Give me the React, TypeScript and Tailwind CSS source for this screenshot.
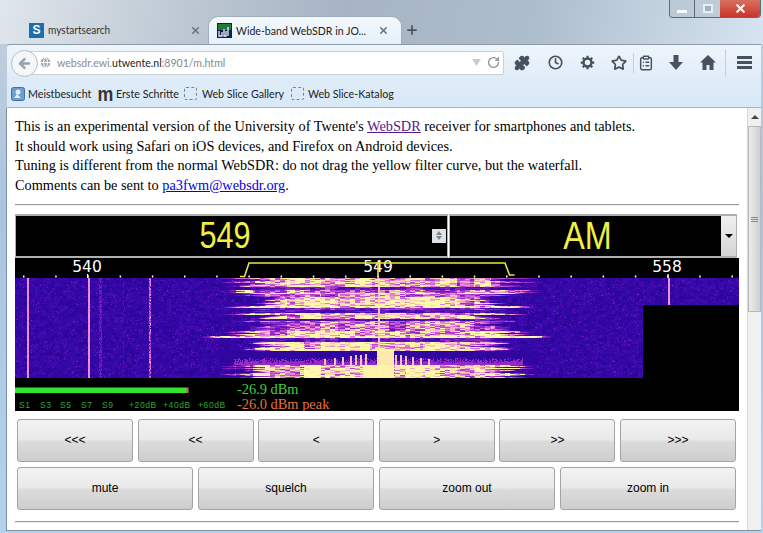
import React, { useEffect, useRef } from 'react';
import { Clock, Star, Puzzle, ClipboardList, RotateCw, ArrowLeft, Globe, X, Plus } from 'lucide-react';

const row1 = ['<<<', '<<', '<', '>', '>>', '>>>'];
const row2 = ['mute', 'squelch', 'zoom out', 'zoom in'];

const meterLabels = [
  { t: 'S1', x: 5 }, { t: 'S3', x: 26 }, { t: 'S5', x: 46 }, { t: 'S7', x: 67 }, { t: 'S9', x: 88 },
  { t: '+20dB', x: 115 }, { t: '+40dB', x: 149 }, { t: '+60dB', x: 184 },
];

// strength and half width of the signal per band of rows
const bands = [
  [0, 8, 0.8, 150], [9, 11, 0.4, 155], [12, 14, 0.72, 158], [15, 15, 1, 172], [16, 18, 0.6, 150],
  [19, 27, 0.92, 132], [28, 29, 0.95, 150], [30, 31, 0.45, 140], [32, 34, 0.3, 150], [35, 36, 0.82, 150],
  [37, 40, 0.95, 125], [41, 42, 0.35, 150], [43, 52, 0.66, 140], [53, 57, 0.82, 150], [58, 59, 1, 172],
  [60, 63, 0.35, 145], [64, 70, 0.88, 130], [71, 72, 1, 150], [73, 86, 0.1, 145], [87, 99, 0.95, 152],
];

const stops = [
  [0, 22, 0, 118], [0.25, 56, 8, 172], [0.5, 150, 40, 200], [0.7, 232, 125, 215], [0.85, 250, 222, 175], [1, 255, 250, 170],
];

function colormap(v: number) {
  const c = Math.max(0, Math.min(1, v));
  for (let i = 1; i < stops.length; i++) {
    if (c <= stops[i][0]) {
      const a = stops[i - 1];
      const b = stops[i];
      const f = (c - a[0]) / (b[0] - a[0]);
      return [a[1] + (b[1] - a[1]) * f, a[2] + (b[2] - a[2]) * f, a[3] + (b[3] - a[3]) * f];
    }
  }
  return [255, 250, 170];
}

function Waterfall() {
  const ref = useRef<HTMLCanvasElement>(null);

  useEffect(() => {
    const ctx = ref.current!.getContext('2d')!;
    const w = 724;
    const h = 100;
    const img = ctx.createImageData(w, h);
    let seed = 549;
    const rnd = () => {
      seed = (seed * 1664525 + 1013904223) % 4294967296;
      return seed / 4294967296;
    };
    const cx = 363;
    const patch = Array.from({ length: 60 }, () => 0.7 + rnd() * 0.5);
    const blobs = Array.from({ length: 40000 }, () => 0.62 + rnd() * 0.6);
    const teeth = [-28, -23, -18, -13, 17, 22, 27, 34, 42, 50, -36, -44, -54];
    for (let y = 0; y < h; y++) {
      const bandIdx = bands.findIndex((b) => y >= b[0] && y <= b[1]);
      const band = bands[bandIdx];
      const edge = band[3] + (rnd() - 0.5) * 34;
      for (let x = 0; x < w; x++) {
        const i = (y * w + x) * 4;
        if (x >= 628 && y >= 27) {
          img.data[i + 3] = 255;
          continue;
        }
        const dx = Math.abs(x - cx);
        const coarse = blobs[(Math.floor(x / 4) + Math.floor(y / 3) * 241) % 40000];
        const cell = blobs[(Math.floor(x / 5) + y * 307) % 40000];
        let v = 0.12 + (coarse - 0.62) * 0.16 + rnd() * 0.1;
        if (rnd() > 0.975) v += 0.16;
        const fall = Math.max(0, Math.min(1, (edge - dx) / 34));
        const p = patch[(Math.floor(x / 17) + bandIdx * 7) % 60];
        v = Math.max(v, band[2] * fall * p * cell * 1.15);
        // carrier and its sidebands in the quiet rows
        if (y >= 73 && y <= 86 && dx < 160) {
          v = Math.min(v, 0.2);
          if (x - cx > -2 && x - cx < 16) v = 0.9;
          if (teeth.some((t) => x - cx === t || x - cx === t + 1) && y > 74 + Math.abs(x - cx) / 8) v = 0.8;
          if (y > 85 - rnd() * 6 && dx < 145) v = Math.max(v, 0.5);
        }
        if (y >= 87 && x - cx > -16 && x - cx < 16) v = 0.92 + rnd() * 0.08;
        // steady carriers
        if (x === 363 || x === 364) v = Math.max(v, 0.8);
        if (x === 12 || x === 13 || x === 73 || x === 74) v = 0.7 + rnd() * 0.05;
        if ((x === 84 || x === 85 || x === 86) && rnd() > 0.35) v = Math.max(v, 0.4);
        if (x === 108 && rnd() > 0.5) v = Math.max(v, 0.32);
        if ((x === 134 || x === 135) && rnd() > 0.1) v = Math.max(v, 0.46 + rnd() * 0.3);
        if ((x === 653 || x === 654) && y < 27) v = 0.74;
        const [r, g, b] = colormap(v);
        img.data[i] = r;
        img.data[i + 1] = g;
        img.data[i + 2] = b;
        img.data[i + 3] = 255;
      }
    }
    ctx.putImageData(img, 0, 0);
  }, []);

  return (
    <div className="h-[100px] overflow-hidden bg-black">
      <canvas ref={ref} width={724} height={100} className="block blur-[0.5px]" />
    </div>
  );
}

function Scale() {
  const ticks = Array.from({ length: 23 }, (_, i) => 8 + i * 32.2);
  return (
    <svg width="724" height="20" className="block bg-black">
      {ticks.map((x) => (
        <rect key={x} x={x} y="17.5" width="1.5" height="2" fill="#fff" />
      ))}
      <rect x="72" y="16" width="1.2" height="4" fill="#fff" />
      <rect x="652.5" y="16" width="1.2" height="4" fill="#fff" />
      <g fill="#fff" fontFamily="'DejaVu Sans', sans-serif" fontSize="15.5" textAnchor="middle">
        <text x="72" y="13.5">540</text>
        <text x="363" y="13.5">549</text>
        <text x="652" y="13.5">558</text>
      </g>
      <path d="M225 18.5H229.5L234 5H490L494.5 17H499.5M363 5V20" fill="none" stroke="#e6e63e" strokeWidth="1.6" />
    </svg>
  );
}

function Meter() {
  return (
    <svg width="724" height="33" className="block bg-black">
      <rect x="0" y="9.5" width="171" height="5.5" fill="#2ee62e" />
      <rect x="171" y="9.5" width="2.5" height="5.5" fill="#9a8a50" />
      <g fill="#2fa82f" fontFamily="'Liberation Sans', sans-serif" fontSize="8.5" letterSpacing="0.6">
        {meterLabels.map((l) => (
          <text key={l.t} x={l.x - 1} y="30">{l.t}</text>
        ))}
      </g>
      <g fontFamily="'Liberation Serif', serif" fontSize="14.4">
        <text x="222" y="15.5" fill="#3fd23f">-26.9 dBm</text>
        <text x="222" y="31" fill="#e8703a">-26.0 dBm peak</text>
      </g>
    </svg>
  );
}

function PageButton({ label }: { label: string }) {
  return (
    <button className="h-[43px] rounded-[3px] border border-[#a3a3a3] bg-[linear-gradient(#f3f3f3_0%,#e9e9e9_48%,#dcdcdc_52%,#cdcdcd_100%)] font-['Liberation_Sans',sans-serif] text-[12px] text-black">
      {label}
    </button>
  );
}

function Gear() {
  return (
    <svg width="15" height="15" viewBox="0 0 16 16">
      <circle cx="8" cy="8" r="4.2" fill="none" stroke="#47525d" strokeWidth="2.6" />
      <path d="M8 .8V3.5M8 12.5V15.2M.8 8H3.5M12.5 8H15.2M2.9 2.9L4.8 4.8M11.2 11.2L13.1 13.1M13.1 2.9L11.2 4.8M4.8 11.2L2.9 13.1" stroke="#47525d" strokeWidth="2.4" />
    </svg>
  );
}

export default function App() {
  return (
    <div className="relative h-[533px] w-[763px] overflow-hidden bg-[linear-gradient(#c5d0db_0%,#a8c4e0_40%,#b4d2ee_100%)] font-['Lato',sans-serif]">
      {/* Title bar with tabs */}
      <div className="relative flex h-[44px] items-end bg-[linear-gradient(100deg,#dfe6ec_0%,#bcc7d2_25%,#a6b4c4_45%,#aebdcc_70%,#d6e4f1_100%)]">
        <div className="flex h-[28px] w-[201px] items-center pl-[29px] text-[12px] text-[#333]">
          <span className="flex h-[15px] w-[15px] items-center justify-center bg-[#1c70aa] font-['Liberation_Sans',sans-serif] text-[12px] font-bold text-white">S</span>
          <span className="ml-[4px] flex-1 origin-left scale-x-[0.84]">mystartsearch</span>
          <X size={11} strokeWidth={3.5} className="text-[#6a7580]" />
        </div>
        <div className="ml-[7px] flex h-[28px] w-[194px] items-center rounded-t-[10px] border border-b-0 border-[#9fb0c0] bg-[linear-gradient(#f4f8fc,#e6f0fa)] pl-[8px] text-[12px] text-[#222]">
          <svg width="15" height="15" viewBox="0 0 15 15" className="shrink-0">
            <rect width="15" height="15" fill="#10204a" />
            <rect x="1" y="1" width="13" height="6" fill="#1d7a3a" />
            <path d="M2 8V13H5V9M7 6V13H9V8M11 4V13" stroke="#e8f0ff" strokeWidth="1.3" fill="none" />
          </svg>
          <span className="ml-[4px] w-[142px] origin-left scale-x-[0.88] whitespace-nowrap">Wide-band WebSDR in JO...</span>
          <X size={11} strokeWidth={3.5} className="text-[#6a7580]" />
        </div>
        <Plus size={14} strokeWidth={3} className="mb-[7px] ml-[3px] text-[#4a5560]" />
        {/* Window buttons */}
        <div className="absolute right-[2px] top-0 flex h-[18px] w-[92px] overflow-hidden rounded-b-[4px] border border-t-0 border-[#5c6b7a]">
          <div className="flex w-[25px] items-end justify-center border-r border-[#5c6b7a] bg-[#b4c2d0]/60 pb-[4px]">
            <div className="h-[3px] w-[10px] bg-white/90" />
          </div>
          <div className="flex w-[25px] items-center justify-center bg-[#b4c2d0]/60">
            <div className="h-[9px] w-[10px] border-2 border-[#e8eef4] bg-[#9fb0c0]" />
          </div>
          <div className="flex flex-1 items-center justify-center bg-[linear-gradient(#d8705f,#c8352a)]">
            <X size={13} strokeWidth={4} className="text-white" />
          </div>
        </div>
      </div>

      {/* Navigation toolbar */}
      <div className="ml-[7px] mr-[2px] flex h-[36px] items-center rounded-tl-[3px] border-t border-[#8c99a8] bg-[linear-gradient(#eef5fb,#dfecf8)]">
        <div className="relative ml-[13px] flex h-[24px] w-[484px] items-center rounded-[2px] border border-[#c8d0d8] bg-white">
          <div className="absolute left-[-10px] top-[-2px] flex h-[27px] w-[27px] items-center justify-center rounded-full border border-[#b4bcc4] bg-[#f4f6f8]">
            <ArrowLeft size={15} strokeWidth={4} className="text-[#98a2ac]" />
          </div>
          <Globe size={13} strokeWidth={1.8} className="ml-[18px] fill-[#a4acb4] text-white" />
          <span className="ml-[5px] flex-1 origin-left scale-x-[0.92] text-[11.5px] text-[#8a8a8a]">
            websdr.ewi.<span className="text-[#222]">utwente.nl</span>:8901/m.html
          </span>
          <svg width="9" height="7" viewBox="0 0 9 7" className="mr-[6px]"><path d="M0 0H9L4.5 7Z" fill="#c8ccd0" /></svg>
          <RotateCw size={13} strokeWidth={2.6} className="mr-[3px] text-[#8e969e]" />
        </div>
        <Puzzle size={16} strokeWidth={2} className="ml-[10px] fill-[#47525d] text-[#47525d]" />
        <Clock size={15} strokeWidth={2.6} className="ml-[18px] text-[#47525d]" />
        <div className="ml-[17px]"><Gear /></div>
        <Star size={16} strokeWidth={2.6} className="ml-[16px] text-[#47525d]" />
        <div className="ml-[6px] h-[20px] w-px bg-[#c4d0dc]" />
        <ClipboardList size={16} strokeWidth={2.2} className="ml-[4px] text-[#47525d]" />
        <svg width="14" height="16" viewBox="0 0 14 16" className="ml-[15px]"><path d="M4.5 0H9.5V7H14L7 15L0 7H4.5Z" fill="#47525d" /></svg>
        <svg width="16" height="15" viewBox="0 0 16 15" className="ml-[17px]"><path d="M8 0L16 7.5H13.5V15H9.5V10H6.5V15H2.5V7.5H0Z" fill="#47525d" /></svg>
        <div className="ml-[9px] h-[28px] w-px bg-[#c4d0dc]" />
        <svg width="15" height="13" viewBox="0 0 15 13" className="ml-[11px]"><path d="M0 0H15V3H0ZM0 5H15V8H0ZM0 10H15V13H0Z" fill="#47525d" /></svg>
      </div>

      {/* Bookmarks */}
      <div className="ml-[7px] mr-[2px] flex h-[28px] items-center whitespace-nowrap border-b border-[#a8b4c0] bg-[linear-gradient(#dfecf8,#d8e8f7)] pl-[4px] text-[12px] text-[#222]">
        <svg width="14" height="14" viewBox="0 0 14 14" className="shrink-0"><rect width="13" height="13" x=".5" y=".5" rx="2" fill="#6a9fd0" stroke="#3d70a8" /><circle cx="7" cy="5" r="2.5" fill="#e4eef8" /><path d="M3 11L6 7L10 11Z" fill="#e4eef8" /></svg>
        <span className="ml-[3px] w-[64px] origin-left scale-x-[0.89]">Meistbesucht</span>
        <span className="ml-[6px] flex w-[15px] justify-center font-['Liberation_Sans',sans-serif] text-[21px] font-bold leading-none text-[#333]">
          <span className="scale-x-[0.85]">m</span>
        </span>
        <span className="ml-[3px] w-[62px] origin-left scale-x-[0.89]">Erste Schritte</span>
        <div className="ml-[6px] h-[13px] w-[13px] rounded-[2px] border border-dashed border-[#7a8590]" />
        <span className="ml-[5px] w-[83px] origin-left scale-x-[0.89]">Web Slice Gallery</span>
        <div className="ml-[6px] h-[13px] w-[13px] rounded-[2px] border border-dashed border-[#7a8590]" />
        <span className="ml-[4px] origin-left scale-x-[0.89]">Web Slice-Katalog</span>
      </div>

      {/* Page */}
      <div className="ml-[6px] mr-[2px] flex h-[423px] border-b border-l border-[#7d90a4] bg-white">
        <div className="w-[740px] px-[8px] pt-[9px]">
          <div className="font-['Liberation_Serif',serif] text-[14.3px] leading-[19.7px] text-black">
            <div>This is an experimental version of the University of Twente's <a className="text-[#551a8b] underline">WebSDR</a> receiver for smartphones and tablets.</div>
            <div>It should work using Safari on iOS devices, and Firefox on Android devices.</div>
            <div>Tuning is different from the normal WebSDR: do not drag the yellow filter curve, but the waterfall.</div>
            <div>Comments can be sent to <a className="text-[#0000ee] underline">pa3fwm@websdr.org</a>.</div>
          </div>
          <div className="mt-[8px] h-[2px] border-t border-[#999] bg-[#eee]" />

          <div className="mt-[8px] flex w-[724px]">
            <div className="relative flex h-[44px] w-[433px] items-center justify-center border border-b-2 border-t-2 border-[#b0b0b0] bg-black pr-[13px]">
              <span className="scale-x-[0.85] font-['Liberation_Sans',sans-serif] text-[36px] leading-none text-[#f0f040]">549</span>
              <div className="absolute right-[1px] top-[13px] flex h-[14px] w-[14px] flex-col items-center justify-center gap-[1px] bg-[#dfe3e8]">
                <div className="h-0 w-0 border-x-[3px] border-b-[4px] border-x-transparent border-b-[#7a8590]" />
                <div className="h-0 w-0 border-x-[3px] border-t-[4px] border-x-transparent border-t-[#7a8590]" />
              </div>
            </div>
            <div className="ml-[1px] flex h-[44px] w-[288px] border border-b-2 border-t-2 border-[#b0b0b0] bg-black">
              <div className="flex flex-1 items-center justify-center pl-[4px]">
                <span className="scale-x-[0.85] font-['Liberation_Sans',sans-serif] text-[38px] leading-none text-[#f0f040]">AM</span>
              </div>
              <div className="flex w-[15px] items-center justify-center bg-[linear-gradient(#f0f0f0,#d4d4d4)]">
                <div className="h-0 w-0 border-x-[4px] border-t-[4px] border-x-transparent border-t-black" />
              </div>
            </div>
          </div>

          <Scale />
          <Waterfall />
          <Meter />

          <div className="ml-[2px] mt-[8px] grid w-[719px] grid-cols-6 gap-x-[4.6px]">
            {row1.map((b) => <PageButton key={b} label={b} />)}
          </div>
          <div className="ml-[2px] mt-[5px] grid w-[719px] grid-cols-4 gap-x-[5px]">
            {row2.map((b) => <PageButton key={b} label={b} />)}
          </div>
          <div className="mt-[11px] h-[2px] border-t border-[#999] bg-[#eee]" />
        </div>

        {/* Scrollbar */}
        <div className="flex w-[14px] flex-col border-l border-[#d8d8d8] bg-[#f0f0f0]">
          <div className="flex h-[18px] items-center justify-center">
            <div className="h-0 w-0 border-x-[4px] border-b-[4px] border-x-transparent border-b-[#444]" />
          </div>
          <div className="flex h-[186px] flex-col items-center justify-center gap-[1px] border border-[#b8b8b8] bg-[linear-gradient(90deg,#ececec,#d0d0d0)]">
            <div className="h-px w-[7px] bg-[#888]" />
            <div className="h-px w-[7px] bg-[#888]" />
            <div className="h-px w-[7px] bg-[#888]" />
          </div>
        </div>
      </div>
    </div>
  );
}
